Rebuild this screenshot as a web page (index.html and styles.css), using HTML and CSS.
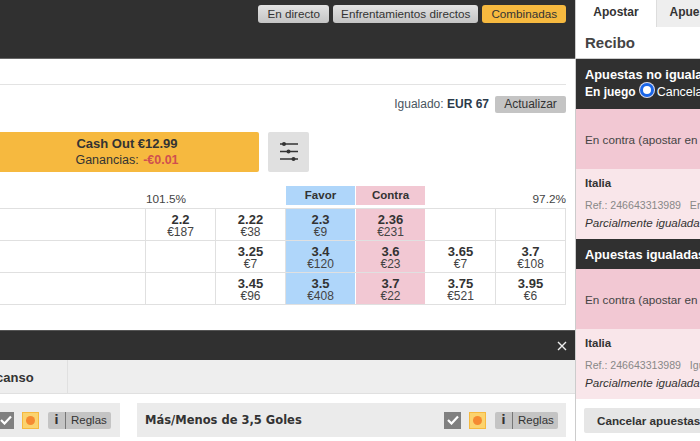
FILE: index.html
```html
<!DOCTYPE html>
<html lang="es">
<head>
  <meta charset="UTF-8">
  <title>Cuotas del partido</title>
  <link rel="stylesheet" href="styles.css">
</head>
<body>
  <div class="page">
    <main class="main">
      <header class="topbar">
        <a class="top-btn">En directo</a>
        <a class="top-btn top-btn-wide">Enfrentamientos directos</a>
        <a class="top-btn top-btn-active">Combinadas</a>
      </header>

      <div class="strip"></div>

      <div class="matched-row">
        <span class="matched">Igualado: <b>EUR 67</b></span>
        <a class="refresh">Actualizar</a>
      </div>

      <div class="cashout-row">
        <div class="cashout">
          <div class="cashout-title">Cash Out €12.99</div>
          <div class="cashout-sub">Ganancias: <b>-€0.01</b></div>
        </div>
        <div class="settings">
          <svg width="22" height="20" viewBox="0 0 22 20">
            <path d="M2 2h18M2 9.5h18M2 17h18" stroke="#333" stroke-width="1.3" fill="none"/>
            <circle cx="6" cy="2" r="2" fill="#333"/>
            <circle cx="10.5" cy="9.5" r="2" fill="#333"/>
            <circle cx="15.5" cy="17" r="2" fill="#333"/>
          </svg>
        </div>
      </div>

      <div class="odds">
        <div class="odds-head">
          <span class="pct-left">101.5%</span>
          <span class="head-back">Favor</span>
          <span class="head-lay">Contra</span>
          <span class="pct-right">97.2%</span>
        </div>
        <div class="odds-row">
          <div class="name"></div>
          <div class="cell"><b>2.2</b>€187</div>
          <div class="cell"><b>2.22</b>€38</div>
          <div class="cell back"><b>2.3</b>€9</div>
          <div class="cell lay"><b>2.36</b>€231</div>
          <div class="cell"></div>
          <div class="cell"></div>
        </div>
        <div class="odds-row">
          <div class="name"></div>
          <div class="cell"></div>
          <div class="cell"><b>3.25</b>€7</div>
          <div class="cell back"><b>3.4</b>€120</div>
          <div class="cell lay"><b>3.6</b>€23</div>
          <div class="cell"><b>3.65</b>€7</div>
          <div class="cell"><b>3.7</b>€108</div>
        </div>
        <div class="odds-row">
          <div class="name"></div>
          <div class="cell"></div>
          <div class="cell"><b>3.45</b>€96</div>
          <div class="cell back"><b>3.5</b>€408</div>
          <div class="cell lay"><b>3.7</b>€22</div>
          <div class="cell"><b>3.75</b>€521</div>
          <div class="cell"><b>3.95</b>€6</div>
        </div>
      </div>

      <div class="darkbar">
        <svg width="10" height="10" viewBox="0 0 10 10"><path d="M1 1l8 8M9 1l-8 8" stroke="#eee" stroke-width="1.4" fill="none"/></svg>
      </div>

      <div class="tabs">
        <div class="tab"><span>canso</span></div>
      </div>

      <div class="markets">
        <div class="market market-left">
          <div class="tools">
            <span class="check"><svg width="12" height="10" viewBox="0 0 12 10"><path d="M1 5l3.5 3.5L11 1.5" stroke="#fff" stroke-width="2.2" fill="none"/></svg></span>
            <span class="pin"><i></i></span>
            <span class="rules"><span class="rules-i">i</span><span class="rules-txt">Reglas</span></span>
          </div>
        </div>
        <div class="market market-right">
          <div class="market-title">Más/Menos de 3,5 Goles</div>
          <div class="tools">
            <span class="check"><svg width="12" height="10" viewBox="0 0 12 10"><path d="M1 5l3.5 3.5L11 1.5" stroke="#fff" stroke-width="2.2" fill="none"/></svg></span>
            <span class="pin"><i></i></span>
            <span class="rules"><span class="rules-i">i</span><span class="rules-txt">Reglas</span></span>
          </div>
        </div>
      </div>
    </main>

    <aside class="side">
      <div class="side-tabs">
        <div class="side-tab side-tab-on">Apostar</div>
        <div class="side-tab">Apuestas</div>
      </div>
      <div class="side-title">Recibo</div>

      <div class="side-dark side-dark-first">
        <div>Apuestas no igualadas</div>
        <div class="side-inplay">En juego <span class="radio"></span> <span class="side-cancel">Cancelar</span></div>
      </div>
      <div class="bet-head">En contra (apostar en contra)</div>
      <div class="bet-body">
        <div class="bet-name">Italia</div>
        <div class="bet-ref">Ref.: 246643313989&nbsp;&nbsp;&nbsp;En</div>
        <div class="bet-state">Parcialmente igualada</div>
      </div>

      <div class="side-dark">Apuestas igualadas</div>
      <div class="bet-head">En contra (apostar en contra)</div>
      <div class="bet-body">
        <div class="bet-name">Italia</div>
        <div class="bet-ref">Ref.: 246643313989&nbsp;&nbsp;&nbsp;Igualada</div>
        <div class="bet-state">Parcialmente igualada</div>
      </div>

      <div class="side-foot"><a class="cancel-all">Cancelar apuestas</a></div>
    </aside>
  </div>
</body>
</html>
```

FILE: styles.css
```css
html, body {
  margin: 0;
  padding: 0;
  height: 100%;
  overflow: hidden;
  font-family: "Liberation Sans", Arial, sans-serif;
  color: #333;
  background: #fff;
}

.page {
  display: flex;
  width: 700px;
  height: 441px;
  overflow: hidden;
}

.main {
  width: 575px;
  flex: none;
  display: flex;
  flex-direction: column;
}

/* Barra superior */
.topbar {
  height: 59px;
  flex: none;
  box-sizing: border-box;
  background: #303030;
  border-bottom: 1px solid #666;
  display: flex;
  justify-content: flex-end;
  align-items: flex-start;
  gap: 4px;
  padding: 5px 9px 0 0;
}

.top-btn {
  height: 18px;
  box-sizing: border-box;
  padding: 0 9px;
  line-height: 18px;
  font-size: 11.7px;
  color: #333;
  background: linear-gradient(#e2e2e2, #c4c4c4);
  border-radius: 3px;
}

.top-btn-wide {
  padding: 0 8px;
}

.top-btn-active {
  background: #f6b93f;
}

.strip {
  height: 25px;
  margin-right: 9px;
  border-bottom: 1px solid #e3e3e3;
}

.matched-row {
  display: flex;
  justify-content: flex-end;
  align-items: center;
  gap: 6px;
  height: 18px;
  margin: 10px 9px 0 0;
}

.matched {
  font-size: 12px;
  color: #4a5560;
}

.matched b {
  color: #2b3a4a;
}

.refresh {
  width: 71px;
  height: 17px;
  line-height: 17px;
  text-align: center;
  font-size: 12px;
  color: #333;
  background: #c4c4c4;
  border-radius: 2px;
}

/* Cash out */
.cashout-row {
  display: flex;
  gap: 9px;
  height: 40px;
  margin-top: 19px;
}

.cashout {
  width: 259px;
  box-sizing: border-box;
  background: #f6b93f;
  border-radius: 0 2px 2px 0;
  text-align: center;
  padding: 3px 5px 0 0;
}

.cashout-title {
  font-size: 13px;
  font-weight: bold;
  line-height: 17px;
}

.cashout-sub {
  font-size: 12.5px;
  line-height: 17px;
}

.cashout-sub b {
  color: #d0504f;
  margin-left: 1px;
}

.settings {
  width: 41px;
  height: 40px;
  background: #e0e0e0;
  border-radius: 2px;
  display: flex;
  align-items: center;
  justify-content: center;
}

/* Tabella quote */
.odds {
  margin: 14px 9px 0 0;
}

.odds-row {
  display: grid;
  grid-template-columns: 146px 70px 70px 70px 70px 70px 70px;
}

.odds-head {
  display: grid;
  grid-template-columns: 286px 70px 70px 140px;
  height: 22px;
  font-size: 11.8px;
}

.pct-left {
  padding-left: 146px;
  line-height: 27px;
  color: #444;
}

.pct-right {
  text-align: right;
  line-height: 27px;
  color: #444;
}

.head-back,
.head-lay {
  height: 19px;
  line-height: 19px;
  margin-right: 1px;
  text-align: center;
  font-weight: bold;
  font-size: 11.5px;
}

.head-back { background: #afd6fa; }
.head-lay { background: #f2c8d3; }

.odds-row {
  height: 32px;
  box-sizing: border-box;
  border-top: 1px solid #e0e0e0;
}

.odds-row:last-child {
  border-bottom: 1px solid #e0e0e0;
  height: 33px;
}

.name {
  border-right: 1px solid #e0e0e0;
}

.cell {
  border-right: 1px solid #e0e0e0;
  text-align: center;
  font-size: 12px;
  line-height: 12px;
  padding-top: 5px;
  color: #444;
}

.cell b {
  display: block;
  font-size: 13px;
  color: #333;
}

.back {
  background: #afd6fa;
  border-right-color: #fff;
}

.lay {
  background: #f2c8d3;
  border-right-color: #fff;
}

/* Zona inferiore */
.darkbar {
  margin-top: 25px;
  height: 30px;
  flex: none;
  box-sizing: border-box;
  background: #303030;
  border-top: 1px solid #555;
  display: flex;
  justify-content: flex-end;
  align-items: center;
  padding-right: 8px;
}

.tabs {
  height: 34px;
  flex: none;
  box-sizing: border-box;
  background: #eee;
  border-bottom: 1px solid #e0e0e0;
}

.tab {
  width: 68px;
  height: 33px;
  box-sizing: border-box;
  border-right: 1px solid #e0e0e0;
  font-size: 13px;
  font-weight: bold;
  line-height: 35px;
  overflow: hidden;
}

.tab span {
  margin-left: -4px;
}

.markets {
  display: flex;
  gap: 17px;
  margin: 9px 9px 0 0;
}

.market {
  height: 34px;
  background: #ebebeb;
  display: flex;
  align-items: center;
  justify-content: flex-end;
}

.market-left {
  width: 120px;
  flex: none;
  padding-right: 9px;
  box-sizing: border-box;
}

.market-right {
  flex: 1;
  justify-content: space-between;
  padding: 0 8px 0 8px;
}

.market-title {
  font-family: "DejaVu Sans", sans-serif;
  font-size: 11.5px;
  font-weight: bold;
}

.tools {
  display: flex;
  align-items: center;
  gap: 8px;
}

.check {
  width: 17px;
  height: 17px;
  background: #808080;
  display: flex;
  align-items: center;
  justify-content: center;
}

.pin {
  width: 17px;
  height: 17px;
  box-sizing: border-box;
  margin-right: 1px;
  background: #fbd36e;
  border: 1px solid #f6b93f;
  display: flex;
  align-items: center;
  justify-content: center;
}

.pin i {
  width: 9px;
  height: 9px;
  border-radius: 50%;
  background: #f58a32;
}

.rules {
  display: flex;
  width: 63px;
  height: 17px;
  background: #c4c4c4;
  border-radius: 2px;
  font-size: 11.5px;
  line-height: 17px;
  color: #333;
}

.rules-i {
  width: 17px;
  flex: none;
  text-align: center;
  font-family: "DejaVu Sans", sans-serif;
  font-weight: bold;
  border-right: 1px solid #777;
}

.rules-txt {
  padding-left: 5px;
}

/* Ricevuta */
.side {
  width: 125px;
  flex: none;
  box-sizing: border-box;
  border-left: 1px solid #ccc;
  overflow: hidden;
  white-space: nowrap;
  background: #fff;
}

.side-tabs {
  display: flex;
  height: 27px;
}

.side-tab {
  width: 80px;
  flex: none;
  box-sizing: border-box;
  text-align: center;
  font-size: 12px;
  font-weight: bold;
  line-height: 25px;
  background: #eee;
  border-left: 1px solid #ddd;
}

.side-tab-on {
  background: #fff;
  border-left: 0;
}

.side-title {
  height: 32px;
  box-sizing: border-box;
  padding-left: 9px;
  font-size: 15px;
  font-weight: bold;
  line-height: 31px;
  color: #444;
  border-bottom: 1px solid #ccc;
}

.side-dark {
  height: 30px;
  box-sizing: border-box;
  background: #303030;
  color: #fff;
  padding: 8px 0 0 9px;
  font-size: 12.8px;
  font-weight: bold;
  line-height: 15px;
}

.side-dark-first {
  height: 50px;
}

.side-inplay {
  display: flex;
  align-items: center;
  height: 19px;
  margin-top: 1px;
  font-size: 12px;
}

.side-cancel {
  font-weight: normal;
  font-size: 12.5px;
  margin-left: 3px;
}

.radio {
  width: 14px;
  height: 14px;
  flex: none;
  box-sizing: border-box;
  margin: -5px 0 0 4px;
  border-radius: 50%;
  border: 3px solid #1a66e8;
  background: #fff;
  box-shadow: 0 0 0 1px #dde;
}

.bet-head {
  height: 60px;
  box-sizing: border-box;
  background: #f2c8d3;
  padding-left: 9px;
  font-size: 11.7px;
  line-height: 62px;
  color: #444;
}

.bet-body {
  height: 70px;
  box-sizing: border-box;
  background: #f9e6ea;
  padding: 7px 0 0 9px;
  font-size: 10.6px;
}

.bet-name {
  font-size: 11.5px;
  font-weight: bold;
  line-height: 15px;
}

.bet-ref {
  margin-top: 8px;
  line-height: 13px;
  color: #888;
}

.bet-state {
  margin-top: 3px;
  font-style: italic;
  font-size: 11.6px;
  line-height: 15px;
  color: #333;
}

.side-foot {
  padding: 9px 0 0 8px;
}

.cancel-all {
  display: block;
  width: 140px;
  height: 25px;
  box-sizing: border-box;
  padding-left: 13px;
  background: #e6e6e6;
  border-radius: 2px;
  font-size: 11.7px;
  font-weight: bold;
  line-height: 26px;
}
```
